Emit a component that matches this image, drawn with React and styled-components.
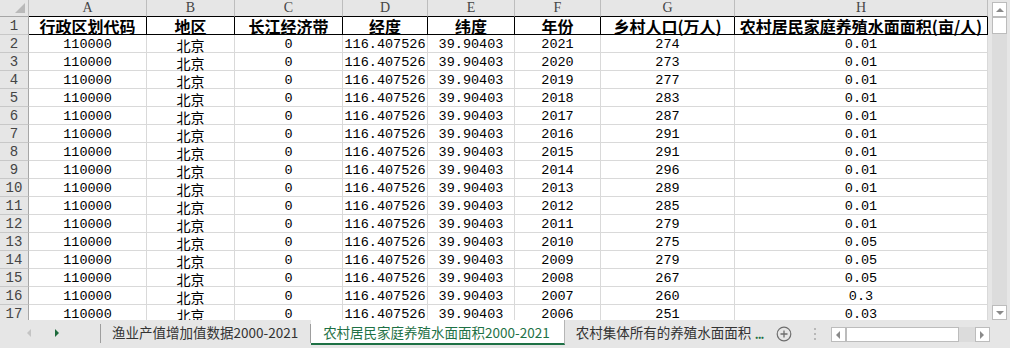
import React from 'react';
import styled, { createGlobalStyle } from 'styled-components';

// column layout of the sheet
const columns = [
  { key: 'A', width: 118, title: '行政区划代码' },
  { key: 'B', width: 88, title: '地区' },
  { key: 'C', width: 108, title: '长江经济带' },
  { key: 'D', width: 85, title: '经度' },
  { key: 'E', width: 87, title: '纬度' },
  { key: 'F', width: 86, title: '年份' },
  { key: 'G', width: 134, title: '乡村人口(万人)' },
  { key: 'H', width: 253, title: '农村居民家庭养殖水面面积(亩/人)' },
];

const records = [
  [2021, 274, '0.01'],
  [2020, 273, '0.01'],
  [2019, 277, '0.01'],
  [2018, 283, '0.01'],
  [2017, 287, '0.01'],
  [2016, 291, '0.01'],
  [2015, 291, '0.01'],
  [2014, 296, '0.01'],
  [2013, 289, '0.01'],
  [2012, 285, '0.01'],
  [2011, 279, '0.01'],
  [2010, 275, '0.05'],
  [2009, 279, '0.05'],
  [2008, 267, '0.05'],
  [2007, 260, '0.3'],
  [2006, 251, '0.03'],
];

const GlobalStyle = createGlobalStyle`
  html, body {
    margin: 0;
    padding: 0;
    background: #e6e6e6;
  }
  body {
    font-family: "Liberation Mono", "Noto Sans CJK SC", monospace;
  }
`;

const Window = styled.div`
  width: 1010px;
  height: 348px;
  display: flex;
  flex-direction: column;
  background: #e6e6e6;
  overflow: hidden;
`;

const Body = styled.div`
  display: flex;
  height: 320px;
  flex-shrink: 0;
`;

const Sheet = styled.div`
  display: grid;
  grid-template-columns: 29px ${columns.map((c) => `${c.width}px`).join(' ')};
  grid-auto-rows: 18px;
  grid-template-rows: 17px;
  align-content: start;
  width: 988px;
  height: 320px;
  overflow: hidden;
  background: #fff;
  flex-shrink: 0;
`;

const Corner = styled.div`
  position: relative;
  background: #e6e6e6;
  border-right: 1px solid #bdbdbd;
  border-bottom: 1px solid #a6a6a6;
  box-sizing: border-box;

  &::after {
    content: '';
    position: absolute;
    right: 3px;
    bottom: 3px;
    width: 0;
    height: 0;
    border-left: 10px solid transparent;
    border-bottom: 10px solid #b9b9b9;
  }
`;

const ColHead = styled.div`
  background: #e6e6e6;
  border-right: 1px solid #bdbdbd;
  border-bottom: 1px solid #000;
  box-sizing: border-box;
  display: flex;
  align-items: center;
  justify-content: center;
  font-family: "Liberation Serif", serif;
  font-size: 14px;
  color: #444;
  line-height: 16px;
`;

const RowHead = styled.div`
  background: #e6e6e6;
  border-right: 1px solid #a6a6a6;
  border-bottom: 1px solid #c8c8c8;
  box-sizing: border-box;
  display: flex;
  align-items: center;
  justify-content: center;
  font-size: 14px;
  color: #444;
  line-height: 16px;
  padding-top: 1px;
`;

const Cell = styled.div`
  box-sizing: border-box;
  border-right: 1px solid ${(p) => (p.$title ? '#000' : '#d9d9d9')};
  border-bottom: 1px solid ${(p) => (p.$title ? '#000' : '#d9d9d9')};
  display: flex;
  align-items: center;
  justify-content: center;
  white-space: nowrap;
  color: #000;
  font-family: ${(p) => (p.$title || p.$cjk ? '"Noto Sans CJK SC", sans-serif' : '"Liberation Mono", "Noto Sans CJK SC", monospace')};
  font-size: ${(p) => (p.$title ? '16px' : p.$cjk ? '14px' : '13.5px')};
  font-weight: ${(p) => (p.$title ? 700 : 400)};
  line-height: ${(p) => (p.$title ? '16px' : '14px')};
  padding-top: ${(p) => (p.$title ? '0' : '2px')};
`;

const VScroll = styled.div`
  display: flex;
  flex-direction: column;
  width: 15px;
  height: 318px;
  margin: 2px 0 0 4px;
  background: #dcdcdc;
`;

const ScrollButton = styled.div`
  width: 15px;
  height: 15px;
  box-sizing: border-box;
  border: 1px solid #bcbcbc;
  background: #fff;
  display: flex;
  align-items: center;
  justify-content: center;
  flex-shrink: 0;
`;

const Thumb = styled.div`
  box-sizing: border-box;
  border: 1px solid #bcbcbc;
  background: #fff;
  flex-shrink: 0;
  width: ${(p) => (p.$horizontal ? `${p.$size}px` : '15px')};
  height: ${(p) => (p.$horizontal ? '15px' : `${p.$size}px`)};
`;

const Track = styled.div`
  flex: 1;
`;

const Arrow = styled.span`
  width: 0;
  height: 0;
  ${(p) =>
    p.$dir === 'up'
      ? 'border-left: 4px solid transparent; border-right: 4px solid transparent; border-bottom: 4px solid #8a8a8a;'
      : p.$dir === 'down'
      ? 'border-left: 4px solid transparent; border-right: 4px solid transparent; border-top: 4px solid #8a8a8a;'
      : p.$dir === 'left'
      ? 'border-top: 4px solid transparent; border-bottom: 4px solid transparent; border-right: 4px solid #8a8a8a;'
      : 'border-top: 4px solid transparent; border-bottom: 4px solid transparent; border-left: 4px solid #8a8a8a;'}
`;

const TabBar = styled.div`
  display: flex;
  height: 28px;
  align-items: flex-start;
  font-family: "Noto Sans CJK SC", sans-serif;
  font-size: 13.5px;
`;

const Nav = styled.div`
  display: flex;
  align-items: center;
  gap: 24px;
  width: 100px;
  height: 26px;
  padding-left: 27px;
  box-sizing: border-box;
  flex-shrink: 0;
`;

const NavArrow = styled.span`
  width: 0;
  height: 0;
  border-top: 4px solid transparent;
  border-bottom: 4px solid transparent;
  ${(p) => (p.$left ? 'border-right: 4px solid #c4c4c4;' : 'border-left: 4px solid #1e6b3c;')}
`;

const Divider = styled.div`
  width: 1px;
  height: 19px;
  margin-top: 4px;
  background: #9e9e9e;
  flex-shrink: 0;
`;

const Tab = styled.div`
  height: 25px;
  line-height: 24px;
  box-sizing: border-box;
  padding: ${(p) => (p.$active ? '0 14px 0 12px' : p.$clip ? '0 0 0 11px' : '0 12px 0 11px')};
  white-space: nowrap;
  overflow: hidden;
  flex-shrink: 0;
  color: ${(p) => (p.$active ? '#1e7145' : '#333')};
  background: ${(p) => (p.$active ? '#fff' : 'transparent')};
  border-bottom: ${(p) => (p.$active ? '2px solid #1e7145' : '2px solid transparent')};
  border-right: ${(p) => (p.$active ? '1px solid #b5b5b5' : 'none')};
  max-width: ${(p) => (p.$clip ? '186px' : 'none')};
`;

const More = styled.div`
  color: #1e7145;
  font-weight: 700;
  font-size: 12px;
  letter-spacing: -1px;
  width: 14px;
  height: 26px;
  line-height: 28px;
  padding-left: 4px;
  flex-shrink: 0;
`;

const AddButton = styled.div`
  width: 30px;
  height: 28px;
  display: flex;
  align-items: center;
  justify-content: center;
  flex-shrink: 0;
`;

const Grip = styled.div`
  display: flex;
  flex-direction: column;
  gap: 3px;
  width: 32px;
  height: 28px;
  align-items: center;
  justify-content: center;
  flex-shrink: 0;

  span {
    width: 2px;
    height: 2px;
    background: #b8b8b8;
  }
`;

const HScroll = styled.div`
  display: flex;
  width: 159px;
  height: 15px;
  margin-top: 7px;
  background: #dcdcdc;
  flex-shrink: 0;
`;

function PlusCircle() {
  return (
    <svg width="16" height="16" viewBox="0 0 16 16">
      <circle cx="8" cy="8" r="6.8" fill="none" stroke="#6e6e6e" strokeWidth="1.2" />
      <path d="M8 4.5v7M4.5 8h7" stroke="#6e6e6e" strokeWidth="1.3" />
    </svg>
  );
}

export default function App() {
  return (
    <Window>
      <GlobalStyle />
      <Body>
        <Sheet>
          <Corner />
          {columns.map((c) => (
            <ColHead key={c.key}>{c.key}</ColHead>
          ))}

          <RowHead>1</RowHead>
          {columns.map((c) => (
            <Cell key={c.key} $title>
              {c.title}
            </Cell>
          ))}

          {records.map(([year, people, area], i) => (
            <React.Fragment key={year}>
              <RowHead>{i + 2}</RowHead>
              <Cell>110000</Cell>
              <Cell $cjk>北京</Cell>
              <Cell>0</Cell>
              <Cell>116.407526</Cell>
              <Cell>39.90403</Cell>
              <Cell>{year}</Cell>
              <Cell>{people}</Cell>
              <Cell>{area}</Cell>
            </React.Fragment>
          ))}
        </Sheet>

        <VScroll>
          <ScrollButton>
            <Arrow $dir="up" />
          </ScrollButton>
          <Thumb $size={17} />
          <Track />
          <ScrollButton>
            <Arrow $dir="down" />
          </ScrollButton>
        </VScroll>
      </Body>

      <TabBar>
        <Nav>
          <NavArrow $left />
          <NavArrow />
        </Nav>
        <Divider />
        <Tab>渔业产值增加值数据2000-2021</Tab>
        <Divider />
        <Tab $active>农村居民家庭养殖水面面积2000-2021</Tab>
        <Tab $clip>农村集体所有的养殖水面面积</Tab>
        <More>...</More>
        <AddButton>
          <PlusCircle />
        </AddButton>
        <Grip>
          <span />
          <span />
          <span />
        </Grip>
        <HScroll>
          <ScrollButton>
            <Arrow $dir="left" />
          </ScrollButton>
          <Thumb $horizontal $size={113} />
          <Track />
          <ScrollButton>
            <Arrow $dir="right" />
          </ScrollButton>
        </HScroll>
      </TabBar>
    </Window>
  );
}
